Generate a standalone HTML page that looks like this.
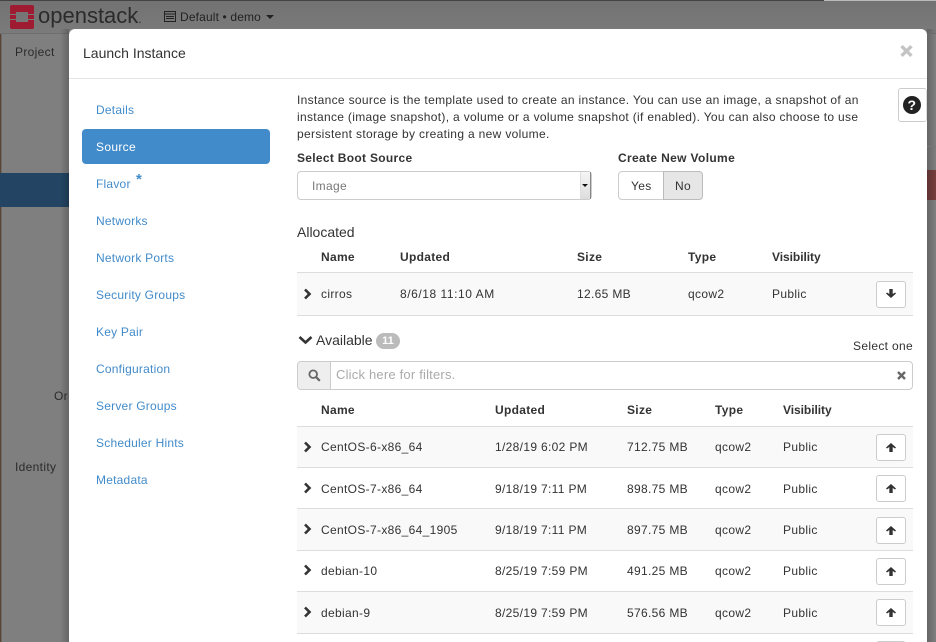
<!DOCTYPE html>
<html><head><meta charset="utf-8"><style>
html,body{margin:0;padding:0;width:936px;height:642px;overflow:hidden;background:#7f7f7f}
body{font-family:"Liberation Sans",sans-serif;font-size:12px;color:#333;position:relative;letter-spacing:.33px}
.a{position:absolute;white-space:nowrap}
.t{position:absolute;white-space:nowrap;line-height:16px}
.b{font-weight:bold;letter-spacing:.3px}
.v{letter-spacing:-.05px}
.nav{color:#428bca;left:96px;letter-spacing:.22px}
.line{position:absolute;background:#ddd;height:1px}
.btn{position:absolute;left:876px;width:30px;height:27px;border:1px solid #ccc;border-radius:3px;background:#fff;box-sizing:border-box}
.btn svg{position:absolute;left:9px;top:8px}
.chev{position:absolute;left:303px}
</style></head><body>
<div class="a" style="left:0;top:0;width:936px;height:34px;background:linear-gradient(#727272,#7b7b7b)"></div>
<div class="a" style="left:0;top:0;width:824px;height:1px;background:#444"></div>
<div class="a" style="left:824px;top:0;width:112px;height:1px;background:#bbb"></div>
<div class="a" style="left:0;top:33px;width:936px;height:1px;background:#6e6e6e"></div>
<div class="a" style="left:0;top:34px;width:1px;height:608px;background:#5a4436"></div>
<div class="a" style="left:1px;top:34px;width:1px;height:608px;background:#6f6a66"></div>
<div class="a" style="left:0;top:173px;width:69px;height:34px;background:#234563"></div>
<div class="a" style="left:927px;top:170px;width:9px;height:30px;background:#763f3d"></div>
<div class="a" style="left:60px;top:29px;width:9px;height:613px;background:linear-gradient(90deg,rgba(0,0,0,0),rgba(0,0,0,.2))"></div>
<div class="a" style="left:927px;top:29px;width:9px;height:613px;background:linear-gradient(90deg,rgba(0,0,0,.2),rgba(0,0,0,0))"></div>
<div class="a" style="left:927px;top:33px;width:9px;height:1px;background:#6a6a6a"></div>
<div class="a" style="left:927px;top:146px;width:9px;height:1px;background:#777"></div>
<svg class="a" style="left:10px;top:5px" width="24" height="24" viewBox="0 0 24 24"><path fill="#9e1b32" fill-rule="evenodd" d="M2 0H22Q24 0 24 2V22Q24 24 22 24H2Q0 24 0 22V2Q0 0 2 0ZM6 7V17H18V7Z"/><path fill="#7a7a7a" d="M0 9h6v1H0zM18 9h6v1h-6zM0 14h6v1H0zM18 14h6v1h-6z"/></svg>
<div class="a" style="left:38px;top:1px;font-size:22px;line-height:30px;color:#2b2b2b;letter-spacing:0">openstack<span style="font-size:12px">.</span></div>
<svg class="a" style="left:164px;top:11px" width="12" height="11" viewBox="0 0 12 11"><path fill="none" stroke="#222" d="M.5.5h11v10H.5z"/><path stroke="#222" d="M1 3h10M2 5.500h8M2 7.500h8"/></svg>
<div class="t" style="left:180px;top:9px;color:#222;letter-spacing:.15px">Default • demo</div>
<div class="a" style="left:266px;top:15px;border:4px solid transparent;border-top-color:#222;border-bottom:0"></div>
<div class="t" style="left:15px;top:44px;color:#2b2b2b">Project</div>
<div class="t" style="left:54px;top:388px;color:#2b2b2b">Or</div>
<div class="t" style="left:15px;top:459px;color:#2b2b2b">Identity</div>

<div class="a" style="left:69px;top:29px;width:858px;height:640px;background:#fff;border-radius:6px 6px 0 0"></div>
<div class="t" style="left:83px;top:44px;font-size:14px;line-height:18px;color:#333;letter-spacing:0">Launch Instance</div>
<div class="line" style="left:69px;top:78px;width:858px;background:#e5e5e5"></div>
<svg class="a" style="left:900px;top:45px" width="13" height="12" viewBox="0 0 13 12"><path stroke="#c4c4c4" stroke-width="3.400" d="M1.500 1.200l10 9.600M11.500 1.200l-10 9.600"/></svg>

<div class="a" style="left:82px;top:129px;width:188px;height:35px;background:#428bca;border-radius:4px"></div>
<div class="t nav" style="top:102px">Details</div>
<div class="t" style="left:96px;top:139px;color:#fff">Source</div>
<div class="t nav" style="top:176px">Flavor</div>
<div class="t nav" style="left:136px;top:172px;font-size:15px;font-weight:bold;letter-spacing:0">*</div>
<div class="t nav" style="top:213px">Networks</div>
<div class="t nav" style="top:250px">Network Ports</div>
<div class="t nav" style="top:287px">Security Groups</div>
<div class="t nav" style="top:324px">Key Pair</div>
<div class="t nav" style="top:361px">Configuration</div>
<div class="t nav" style="top:398px">Server Groups</div>
<div class="t nav" style="top:435px">Scheduler Hints</div>
<div class="t nav" style="top:472px">Metadata</div>

<div class="t" style="left:297px;top:92px;letter-spacing:.32px">Instance source is the template used to create an instance. You can use an image, a snapshot of an</div>
<div class="t" style="left:297px;top:109px;letter-spacing:.32px">instance (image snapshot), a volume or a volume snapshot (if enabled). You can also choose to use</div>
<div class="t" style="left:297px;top:126px">persistent storage by creating a new volume.</div>
<div class="a" style="left:898px;top:88px;width:29px;height:34px;border:1px solid #ccc;border-right:1px solid #ddd;border-radius:3px;box-sizing:border-box;background:#fff"></div>
<svg class="a" style="left:903px;top:96px" width="18" height="18" viewBox="0 0 18 18"><circle cx="9" cy="9" r="9" fill="#222"/><text x="9" y="14" text-anchor="middle" font-family="Liberation Sans" font-weight="bold" font-size="14" fill="#fff">?</text></svg>

<div class="t b" style="left:297px;top:150px">Select Boot Source</div>
<div class="t b" style="left:618px;top:150px;letter-spacing:.35px">Create New Volume</div>
<div class="a" style="left:297px;top:171px;width:295px;height:29px;border:1px solid #ccc;border-radius:4px;box-sizing:border-box;background:#fff"></div>
<div class="t" style="left:312px;top:178px;color:#777">Image</div>
<div class="a" style="left:580px;top:172px;width:11px;height:27px;background:linear-gradient(#f5f5f5,#ddd);border-left:1px solid #ddd;border-right:1px solid #888;box-sizing:border-box"></div>
<div class="a" style="left:582px;top:184px;border:3px solid transparent;border-top-color:#111;border-bottom:0"></div>
<div class="a" style="left:618px;top:171px;width:46px;height:29px;border:1px solid #ccc;border-radius:4px 0 0 4px;box-sizing:border-box;background:#fff"></div>
<div class="t" style="left:631px;top:178px">Yes</div>
<div class="a" style="left:663px;top:171px;width:40px;height:29px;border:1px solid #bbb;border-radius:0 4px 4px 0;box-sizing:border-box;background:#e6e6e6"></div>
<div class="t" style="left:675px;top:178px">No</div>

<div class="t" style="left:297px;top:223px;font-size:14px;line-height:18px;letter-spacing:0">Allocated</div>
<div class="t b" style="left:321px;top:249px">Name</div>
<div class="t b" style="left:400px;top:249px">Updated</div>
<div class="t b" style="left:577px;top:249px">Size</div>
<div class="t b" style="left:688px;top:249px">Type</div>
<div class="t b v" style="left:772px;top:249px">Visibility</div>
<div class="a" style="left:297px;top:272px;width:616px;height:44px;background:#f9f9f9;border-top:1px solid #ddd;border-bottom:1px solid #ddd;box-sizing:border-box"></div>
<svg class="chev" style="top:288px" width="9" height="12" viewBox="0 0 9 12"><path fill="none" stroke="#333" stroke-width="2.600" d="M2 1.500L6.500 6 2 10.500"/></svg>
<div class="t" style="left:321px;top:286px">cirros</div>
<div class="t" style="left:400px;top:286px;letter-spacing:.55px">8/6/18 11:10 AM</div>
<div class="t" style="left:577px;top:286px">12.65 MB</div>
<div class="t" style="left:688px;top:286px">qcow2</div>
<div class="t" style="left:772px;top:286px">Public</div>
<div class="btn" style="top:281px"><svg style="top:7px" width="10" height="9" viewBox="0 0 10 9"><path fill="#333" d="M5 9L0 4.500 1 3.500 3.300 5V0H6.700V5L9 3.500 10 4.500Z"/></svg></div>

<svg class="a" style="left:298px;top:335px" width="15" height="10" viewBox="0 0 15 10"><path fill="none" stroke="#333" stroke-width="2.600" d="M1.500 2l6 5.500 6-5.500"/></svg>
<div class="t" style="left:316px;top:331px;font-size:14px;line-height:18px;letter-spacing:0">Available</div>
<div class="a" style="left:376px;top:333px;width:24px;height:16px;border-radius:8px;background:#bbb;color:#fff;font-weight:bold;font-size:11px;line-height:16px;text-align:center;letter-spacing:0">11</div>
<div class="t" style="left:853px;top:338px">Select one</div>
<div class="a" style="left:297px;top:361px;width:616px;height:29px;border:1px solid #ccc;border-radius:4px;box-sizing:border-box;background:#fff"></div>
<div class="a" style="left:298px;top:362px;width:33px;height:27px;background:#eee;border-right:1px solid #ccc;border-radius:3px 0 0 3px;box-sizing:border-box"></div>
<svg class="a" style="left:308px;top:369px" width="13" height="13" viewBox="0 0 13 13"><circle cx="5.200" cy="5.200" r="3.800" fill="none" stroke="#666" stroke-width="1.800"/><path stroke="#666" stroke-width="2.200" d="M8 8l3.800 3.800"/></svg>
<div class="t" style="left:336px;top:367px;color:#aaa;font-size:13px;letter-spacing:.2px">Click here for filters.</div>
<svg class="a" style="left:897px;top:371px" width="9" height="9" viewBox="0 0 9 9"><path stroke="#666" stroke-width="2.400" d="M1 1l7 7M8 1L1 8"/></svg>

<div class="t b" style="left:321px;top:402px">Name</div>
<div class="t b" style="left:495px;top:402px">Updated</div>
<div class="t b" style="left:627px;top:402px">Size</div>
<div class="t b" style="left:715px;top:402px">Type</div>
<div class="t b v" style="left:783px;top:402px">Visibility</div>
<div class="line" style="left:297px;top:426px;width:616px"></div>

<div class="a" style="left:297px;top:427px;width:616px;height:40px;background:#f9f9f9"></div>
<div class="a" style="left:297px;top:509px;width:616px;height:41px;background:#f9f9f9"></div>
<div class="a" style="left:297px;top:592px;width:616px;height:41px;background:#f9f9f9"></div>
<div class="line" style="left:297px;top:467px;width:616px"></div>
<div class="line" style="left:297px;top:508px;width:616px"></div>
<div class="line" style="left:297px;top:550px;width:616px"></div>
<div class="line" style="left:297px;top:591px;width:616px"></div>
<div class="line" style="left:297px;top:633px;width:616px"></div>

<svg class="chev" style="top:441px" width="9" height="12" viewBox="0 0 9 12"><path fill="none" stroke="#333" stroke-width="2.600" d="M2 1.500L6.500 6 2 10.500"/></svg>
<div class="t" style="left:321px;top:439px">CentOS-6-x86_64</div><div class="t" style="left:495px;top:439px">1/28/19 6:02 PM</div><div class="t" style="left:627px;top:439px">712.75 MB</div><div class="t" style="left:715px;top:439px">qcow2</div><div class="t" style="left:783px;top:439px">Public</div>
<div class="btn" style="top:434px"><svg width="10" height="9" viewBox="0 0 10 9"><path fill="#333" d="M5 0L10 4.500 9 5.500 6.700 4V9H3.300V4L1 5.500 0 4.500Z"/></svg></div>

<svg class="chev" style="top:482px" width="9" height="12" viewBox="0 0 9 12"><path fill="none" stroke="#333" stroke-width="2.600" d="M2 1.500L6.500 6 2 10.500"/></svg>
<div class="t" style="left:321px;top:481px">CentOS-7-x86_64</div><div class="t" style="left:495px;top:481px">9/18/19 7:11 PM</div><div class="t" style="left:627px;top:481px">898.75 MB</div><div class="t" style="left:715px;top:481px">qcow2</div><div class="t" style="left:783px;top:481px">Public</div>
<div class="btn" style="top:475px"><svg width="10" height="9" viewBox="0 0 10 9"><path fill="#333" d="M5 0L10 4.500 9 5.500 6.700 4V9H3.300V4L1 5.500 0 4.500Z"/></svg></div>

<svg class="chev" style="top:523px" width="9" height="12" viewBox="0 0 9 12"><path fill="none" stroke="#333" stroke-width="2.600" d="M2 1.500L6.500 6 2 10.500"/></svg>
<div class="t" style="left:321px;top:522px">CentOS-7-x86_64_1905</div><div class="t" style="left:495px;top:522px">9/18/19 7:11 PM</div><div class="t" style="left:627px;top:522px">897.75 MB</div><div class="t" style="left:715px;top:522px">qcow2</div><div class="t" style="left:783px;top:522px">Public</div>
<div class="btn" style="top:517px"><svg width="10" height="9" viewBox="0 0 10 9"><path fill="#333" d="M5 0L10 4.500 9 5.500 6.700 4V9H3.300V4L1 5.500 0 4.500Z"/></svg></div>

<svg class="chev" style="top:564px" width="9" height="12" viewBox="0 0 9 12"><path fill="none" stroke="#333" stroke-width="2.600" d="M2 1.500L6.500 6 2 10.500"/></svg>
<div class="t" style="left:321px;top:563px">debian-10</div><div class="t" style="left:495px;top:563px">8/25/19 7:59 PM</div><div class="t" style="left:627px;top:563px">491.25 MB</div><div class="t" style="left:715px;top:563px">qcow2</div><div class="t" style="left:783px;top:563px">Public</div>
<div class="btn" style="top:558px"><svg width="10" height="9" viewBox="0 0 10 9"><path fill="#333" d="M5 0L10 4.500 9 5.500 6.700 4V9H3.300V4L1 5.500 0 4.500Z"/></svg></div>

<svg class="chev" style="top:606px" width="9" height="12" viewBox="0 0 9 12"><path fill="none" stroke="#333" stroke-width="2.600" d="M2 1.500L6.500 6 2 10.500"/></svg>
<div class="t" style="left:321px;top:605px">debian-9</div><div class="t" style="left:495px;top:605px">8/25/19 7:59 PM</div><div class="t" style="left:627px;top:605px">576.56 MB</div><div class="t" style="left:715px;top:605px">qcow2</div><div class="t" style="left:783px;top:605px">Public</div>
<div class="btn" style="top:599px"><svg width="10" height="9" viewBox="0 0 10 9"><path fill="#333" d="M5 0L10 4.500 9 5.500 6.700 4V9H3.300V4L1 5.500 0 4.500Z"/></svg></div>
<div class="btn" style="top:641px"></div>
</body></html>
